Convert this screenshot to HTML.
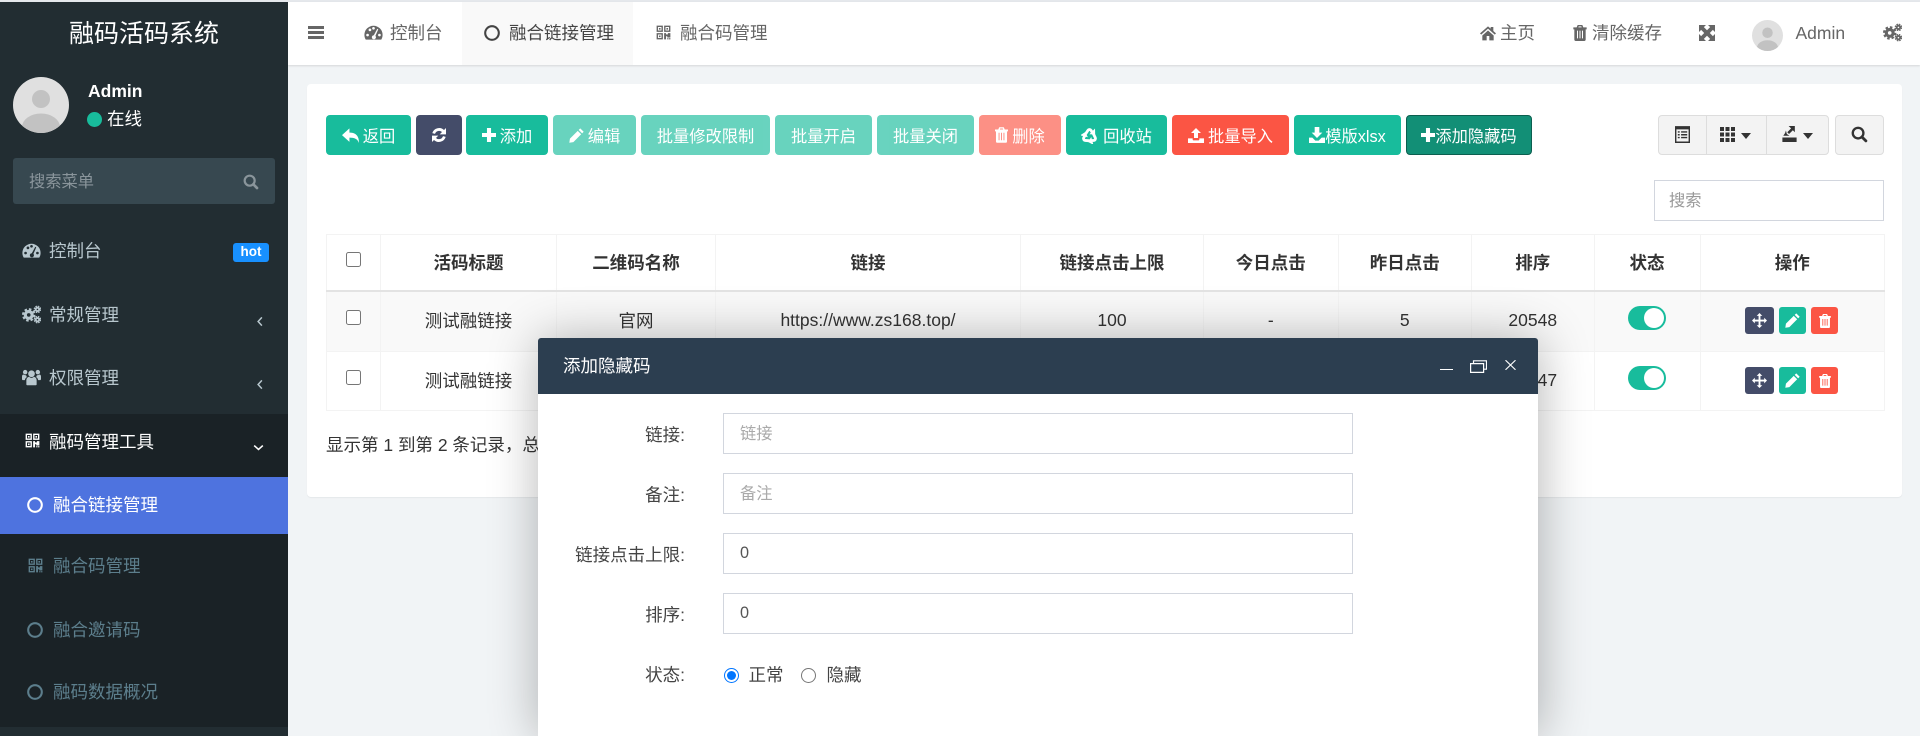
<!DOCTYPE html>
<html lang="zh"><head><meta charset="utf-8"><title>融码活码系统</title>
<style>
*{box-sizing:border-box}
html,body{margin:0;padding:0;width:1920px;height:736px;overflow:hidden;background:#f1f4f6;font-family:"Liberation Sans","Noto Sans CJK SC",sans-serif;font-size:17.5px;color:#333}
#p{position:absolute;left:0;top:0;width:1920px;height:736px;overflow:hidden}
.a,.t,svg.i{position:absolute}
.t{line-height:24px;height:24px;white-space:nowrap}
.btn{position:absolute;top:115px;height:40px;border-radius:4px;background:#18bc9c;color:#fff;font-size:16.25px;display:flex;align-items:center;justify-content:center;gap:4px;white-space:nowrap}
.btn svg{width:17px;height:17px;flex:none}
.dis{opacity:.65}
svg.i{display:block}
table{position:absolute;left:326px;top:234px;width:1558px;border-collapse:collapse;table-layout:fixed;font-size:17.5px}
td,th{border:1px solid #f3f3f3;text-align:center;padding:0;color:#333}
th{font-weight:700;height:56px;border-bottom:2px solid #e3e3e3}
.r1 td{height:61px;background:#f9f9f9;padding-bottom:2px}
.r2 td{height:59px;background:#fff;padding-bottom:2px}
input.c{position:absolute;margin:0;width:15px;height:15px}
.sw{position:absolute;left:1628px;width:38px;height:24px;border-radius:12px;background:#18bc9c}
.sw:after{content:"";position:absolute;right:2px;top:2px;width:20px;height:20px;border-radius:50%;background:#fff}
.op{position:absolute;height:27px;border-radius:3px;display:flex;align-items:center;justify-content:center}
.op svg{width:15px;height:15px;color:#fff}
.inp{position:absolute;left:723px;width:630px;height:41px;border:1px solid #d2d6de;background:#fff;padding-left:16px;line-height:39px;font-size:16.25px;color:#555}
.ph{color:#aaa;line-height:40px}
.lb{position:absolute;right:1235px;height:24px;line-height:24px;color:#444}
.sub{color:#5c7e8c}
.top{color:#b8c7ce}
.h{color:#666}
</style></head><body>
<svg width="0" height="0" style="position:absolute">
<defs>
<symbol id="dash" viewBox="0 0 24 24"><path fill="currentColor" fill-rule="evenodd" d="M12 3.500A11.500 11.500 0 0 0 .5 15c0 2.200.6 4.200 1.700 6h19.600c1.100-1.800 1.700-3.800 1.700-6A11.500 11.500 0 0 0 12 3.500zM4.500 13.500a1.700 1.700 0 1 1 0 3.400 1.700 1.700 0 0 1 0-3.400zM7.500 7a1.700 1.700 0 1 1 0 3.400A1.700 1.700 0 0 1 7.500 7zM12 5a1.700 1.700 0 1 1 0 3.400A1.700 1.700 0 0 1 12 5zM19.500 13.500a1.700 1.700 0 1 1 0 3.400 1.700 1.700 0 0 1 0-3.400zM16.800 7.200l1.200.8-3.600 8.200a2.600 2.600 0 1 1-2-.8z"/></symbol>
<symbol id="cogs" viewBox="0 0 24 24"><g fill="none" stroke="currentColor"><circle cx="8.500" cy="12.500" r="4.300" stroke-width="4"/><circle cx="8.500" cy="12.500" r="7.200" stroke-width="2.600" stroke-dasharray="3.200 2.450"/><circle cx="19.500" cy="5.500" r="2.200" stroke-width="2.400"/><circle cx="19.500" cy="5.500" r="4" stroke-width="1.500" stroke-dasharray="2 1.140"/><circle cx="19.500" cy="18.500" r="2.200" stroke-width="2.400"/><circle cx="19.500" cy="18.500" r="4" stroke-width="1.500" stroke-dasharray="2 1.140"/></g></symbol>
<symbol id="users" viewBox="0 0 24 24"><g fill="currentColor"><circle cx="12" cy="8.500" r="4.200"/><circle cx="4" cy="6.500" r="2.800"/><circle cx="20" cy="6.500" r="2.800"/><path d="M5.500 22v-5c0-3 2-4.500 3.500-4.500 1 .8 2 1.200 3 1.200s2-.4 3-1.200c1.500 0 3.500 1.500 3.500 4.500v5c0 .6-.5 1-1 1h-11c-.5 0-1-.4-1-1z"/><path d="M0 14v-2c0-1.500 1-2.500 2-2.500.7.600 1.400.9 2.200.9.300 0 .6 0 1-.2.100 1 .5 1.800 1.100 2.500-1.500.8-2.400 2.300-2.700 3.800H1c-.6 0-1-.5-1-1.500zM24 14v-2c0-1.500-1-2.500-2-2.500-.7.600-1.400.9-2.200.9-.3 0-.6 0-1-.2-.1 1-.5 1.800-1.100 2.500 1.500.8 2.400 2.300 2.700 3.800H23c.6 0 1-.5 1-1.500z"/></g></symbol>
<symbol id="qr" viewBox="0 0 24 24"><path fill="currentColor" fill-rule="evenodd" d="M1 1h10v10H1zM3.200 3.200v5.600h5.600V3.200zM4.700 4.700h2.600v2.600H4.700zM13 1h10v10H13zM15.200 3.200v5.600h5.600V3.200zM16.700 4.700h2.600v2.600h-2.600zM1 13h10v10H1zM3.200 15.200v5.600h5.600v-5.600zM4.700 16.700h2.600v2.600H4.700zM13 13h3v2h3v-2h4v7h-5v-2h-2v5h-3zM18 21h2v2h-2zM21 21h2v2h-2z"/></symbol>
<symbol id="ring" viewBox="0 0 16 16"><circle cx="8" cy="8" r="6.800" fill="none" stroke="currentColor" stroke-width="2.100"/></symbol>
<symbol id="bars" viewBox="0 0 16 13"><path fill="currentColor" d="M0 0h16v3H0zM0 5h16v3H0zM0 10h16v3H0z"/></symbol>
<symbol id="home" viewBox="0 0 24 24"><path fill="currentColor" d="M12 2 0 12.500l1.800 2L12 5.500l10.200 9 1.800-2-4-3.500V3h-4v2.500zM3.500 15.800V23h6.500v-6.500h4V23h6.500v-7.200L12 8.300z"/></symbol>
<symbol id="trash" viewBox="0 0 20 24"><path fill="currentColor" fill-rule="evenodd" d="M6.500 0h7L15 3.500h5v3h-1.500V22c0 1.200-1 2-2 2h-13c-1 0-2-.8-2-2V6.500H0v-3h5zM8 2 7.500 3.500h5L12 2zM5.500 8.500v11.500h1.500V8.500zM9.250 8.500v11.500h1.500V8.500zM13 8.500v11.500h1.500V8.500z"/></symbol>
<symbol id="expand" viewBox="0 0 24 24"><path fill="currentColor" d="M0 0h10.500L7.300 3.200 12 7.800l4.700-4.600L13.500 0H24v10.500l-3.200-3.200L16.200 12l4.600 4.700 3.200-3.200V24H13.500l3.200-3.200L12 16.200l-4.700 4.600 3.200 3.200H0V13.500l3.200 3.200L7.800 12 3.200 7.300 0 10.500z"/></symbol>
<symbol id="reply" viewBox="0 0 24 24"><path fill="currentColor" d="M10.500 2v6C19 8 24 12 24 22.500c-2-5.500-6-7.500-13.500-7.500v6L0 11.500z"/></symbol>
<symbol id="sync" viewBox="0 0 24 24"><g fill="none" stroke="currentColor" stroke-width="4.200"><path d="M4 9.800A8.500 8.500 0 0 1 18.500 6.500"/><path d="M20 14.200A8.500 8.500 0 0 1 5.500 17.500"/></g><path fill="currentColor" d="M22.500 1.500v9.500H13zM1.500 22.500V13H11z"/></symbol>
<symbol id="plus" viewBox="0 0 24 24"><path fill="currentColor" d="M8.500 0h7v8.500H24v7h-8.500V24h-7v-8.500H0v-7h8.500z"/></symbol>
<symbol id="pen" viewBox="0 0 24 24"><path fill="currentColor" d="M18 .5l5.500 5.500-2.500 2.500L15.500 3zM14 4.500l5.500 5.500L7 22.500 .5 23.500l1-6.500z"/></symbol>
<symbol id="rec" viewBox="0 0 24 24"><g id="ra"><path fill="none" stroke="currentColor" stroke-width="4" d="M6 10.500 9.800 4.800c1-1.500 3.400-1.500 4.400 0l1.800 3"/><path fill="currentColor" d="M11.800 10.300l8.200.2-.2-8.400z"/></g><use href="#ra" transform="rotate(120 12 13)"/><use href="#ra" transform="rotate(240 12 13)"/></symbol>
<symbol id="up" viewBox="0 0 24 24"><path fill="currentColor" d="M12 1.500l7.500 7.500H15v7.500H9V9H4.500zM0 17h7v1.500c0 1 .8 1.500 1.500 1.500h7c.7 0 1.500-.5 1.500-1.500V17h7v7H0z"/></symbol>
<symbol id="down" viewBox="0 0 24 24"><path fill="currentColor" d="M8.500 0h7v8.500H20L12 16.500 4 8.500h4.500zM0 16h5l4.500 4.500h5L19 16h5v8H0z"/></symbol>
<symbol id="list" viewBox="0 0 16 18"><path fill="currentColor" fill-rule="evenodd" d="M0 0h16v18H0zM1.500 3.500V16.500h13V3.500zM3 5.500h2v1.500H3zM6.500 5.500H13v1.500H6.500zM3 8.500h2V10H3zM6.500 8.500H13V10H6.500zM3 11.500h2V13H3zM6.500 11.500H13V13H6.500z"/></symbol>
<symbol id="th" viewBox="0 0 15 15"><path fill="currentColor" d="M0 0h4v4H0zM5.500 0h4v4h-4zM11 0h4v4h-4zM0 5.500h4v4H0zM5.500 5.500h4v4h-4zM11 5.500h4v4h-4zM0 11h4v4H0zM5.500 11h4v4h-4zM11 11h4v4h-4z"/></symbol>
<symbol id="exp" viewBox="0 0 16 18"><path fill="currentColor" d="M7 0h7v7l-2.200-2.200L7.500 9 5.500 7l4.300-4.300zM4 5l1 4 3 2H1l2-3zM0 13h16v5H0z"/></symbol>
<symbol id="sr" viewBox="0 0 24 24"><path fill="none" stroke="currentColor" stroke-width="3.300" d="M10 2.500a7.500 7.500 0 1 0 0 15 7.500 7.500 0 0 0 0-15z"/><path fill="none" stroke="currentColor" stroke-width="4" stroke-linecap="round" d="M15.500 15.500 21 21"/></symbol>
<symbol id="move" viewBox="0 0 24 24"><path fill="currentColor" d="M12 0l4.500 4.500h-3v6h6v-3L24 12l-4.500 4.500v-3h-6v6h3L12 24l-4.500-4.500h3v-6h-6v3L0 12l4.500-4.500v3h6v-6h-3z"/></symbol>
<symbol id="lft" viewBox="0 0 8 14"><path fill="none" stroke="currentColor" stroke-width="2" d="M6.500 1.500 1.500 7l5 5.500"/></symbol>
<symbol id="dwn" viewBox="0 0 14 8"><path fill="none" stroke="currentColor" stroke-width="2" d="M1.500 1.500 7 6.500l5.500-5"/></symbol>
</defs></svg>
<div id="p">
<!-- top strip + header -->
<div class="a" style="left:0;top:0;width:1920px;height:2px;background:#e5e8ec"></div>
<div class="a" style="left:288px;top:2px;width:1632px;height:63px;background:#fff;box-shadow:0 1px 2px rgba(0,0,0,.12)"></div>
<div class="a" style="left:462px;top:2px;width:171px;height:63px;background:#f9f9f9"></div>
<svg class="i h" style="left:308px;top:26px;width:16px;height:13px"><use href="#bars"/></svg>
<svg class="i h" style="left:364px;top:23px;width:19px;height:19px"><use href="#dash"/></svg>
<div class="t" style="left:390px;top:21px;color:#666">控制台</div>
<svg class="i" style="left:484px;top:25px;width:16px;height:16px;color:#444"><use href="#ring"/></svg>
<div class="t" style="left:509px;top:21px;color:#444">融合链接管理</div>
<svg class="i h" style="left:656px;top:25px;width:15px;height:15px"><use href="#qr"/></svg>
<div class="t" style="left:680px;top:21px;color:#666">融合码管理</div>
<svg class="i h" style="left:1480px;top:25px;width:16px;height:16px"><use href="#home"/></svg>
<div class="t" style="left:1500px;top:21px;color:#666">主页</div>
<svg class="i h" style="left:1573px;top:25px;width:14px;height:16px"><use href="#trash"/></svg>
<div class="t" style="left:1592px;top:21px;color:#666">清除缓存</div>
<svg class="i h" style="left:1699px;top:25px;width:16px;height:16px"><use href="#expand"/></svg>
<svg class="i" style="left:1752px;top:20px;width:31px;height:31px" viewBox="0 0 56 56"><clipPath id="c1"><circle cx="28" cy="28" r="28"/></clipPath><circle cx="28" cy="28" r="28" fill="#e0e0e0"/><g clip-path="url(#c1)" fill="#c2c2c2"><circle cx="28" cy="23" r="9.500"/><ellipse cx="28" cy="50" rx="19" ry="13.500"/></g></svg>
<div class="t" style="left:1795.500px;top:21px;color:#666">Admin</div>
<svg class="i h" style="left:1883px;top:23px;width:19px;height:19px"><use href="#cogs"/></svg>

<!-- sidebar -->
<div class="a" style="left:0;top:2px;width:288px;height:734px;background:#222d32"></div>
<div class="a" style="left:0;top:414px;width:288px;height:313px;background:#1a2226"></div>
<div class="a" style="left:0;top:477px;width:288px;height:57px;background:#4e73df"></div>
<div class="t" style="left:0;top:19px;width:288px;height:30px;line-height:30px;text-align:center;font-size:25px;color:#fff">融码活码系统</div>
<svg class="i" style="left:13px;top:77px;width:56px;height:56px" viewBox="0 0 56 56"><clipPath id="c2"><circle cx="28" cy="28" r="28"/></clipPath><circle cx="28" cy="28" r="28" fill="#e0e0e0"/><g clip-path="url(#c2)" fill="#c2c2c2"><circle cx="28" cy="22" r="9"/><ellipse cx="28" cy="50" rx="19" ry="13.500"/></g></svg>
<div class="t" style="left:88px;top:79px;font-weight:700;color:#fff;font-size:17.500px">Admin</div>
<div class="a" style="left:87px;top:112px;width:15px;height:15px;border-radius:50%;background:#18bc9c"></div>
<div class="t" style="left:107px;top:107px;color:#fff">在线</div>
<div class="a" style="left:13px;top:158px;width:262px;height:46px;border-radius:3px;background:#374850"></div>
<div class="t" style="left:29px;top:170px;font-size:16.250px;color:#8a959b">搜索菜单</div>
<svg class="i" style="left:243px;top:174px;width:16px;height:16px;color:#8a959b"><use href="#sr"/></svg>

<svg class="i top" style="left:22px;top:241px;width:19px;height:19px"><use href="#dash"/></svg>
<div class="t top" style="left:49px;top:239px">控制台</div>
<div class="a" style="left:233px;top:243px;width:36px;height:19px;border-radius:3px;background:#1890ff;color:#fff;font-weight:700;font-size:13.500px;line-height:18px;text-align:center">hot</div>
<svg class="i top" style="left:22px;top:305px;width:19px;height:19px"><use href="#cogs"/></svg>
<div class="t top" style="left:49px;top:303px">常规管理</div>
<svg class="i top" style="left:257px;top:316px;width:6px;height:11px"><use href="#lft"/></svg>
<svg class="i top" style="left:22px;top:367px;width:19px;height:19px"><use href="#users"/></svg>
<div class="t top" style="left:49px;top:366px">权限管理</div>
<svg class="i top" style="left:257px;top:379px;width:6px;height:11px"><use href="#lft"/></svg>
<svg class="i" style="left:24.500px;top:433px;width:15px;height:15px;color:#fff"><use href="#qr"/></svg>
<div class="t" style="left:49px;top:430px;color:#fff">融码管理工具</div>
<svg class="i" style="left:253px;top:444px;width:11px;height:7px;color:#fff"><use href="#dwn"/></svg>
<svg class="i" style="left:27px;top:497px;width:16px;height:16px;color:#fff"><use href="#ring"/></svg>
<div class="t" style="left:53px;top:493px;color:#fff">融合链接管理</div>
<svg class="i sub" style="left:28px;top:558px;width:15px;height:15px"><use href="#qr"/></svg>
<div class="t sub" style="left:53px;top:554px">融合码管理</div>
<svg class="i sub" style="left:27px;top:622px;width:16px;height:16px"><use href="#ring"/></svg>
<div class="t sub" style="left:53px;top:618px">融合邀请码</div>
<svg class="i sub" style="left:27px;top:684px;width:16px;height:16px"><use href="#ring"/></svg>
<div class="t sub" style="left:53px;top:680px">融码数据概况</div>

<!-- panel -->
<div class="a" style="left:307px;top:84px;width:1595px;height:413px;background:#fff;border-radius:4px;box-shadow:0 1px 1px rgba(0,0,0,.05)"></div>
<div class="btn" style="left:326px;width:85px"><svg><use href="#reply"/></svg>返回</div>
<div class="btn" style="left:416px;width:46px;background:#444c69"><svg style="width:16px;height:16px"><use href="#sync"/></svg></div>
<div class="btn" style="left:466px;width:82px"><svg style="width:14px;height:14px"><use href="#plus"/></svg>添加</div>
<div class="btn dis" style="left:553px;width:83px"><svg style="width:15px;height:15px"><use href="#pen"/></svg>编辑</div>
<div class="btn dis" style="left:641px;width:129px">批量修改限制</div>
<div class="btn dis" style="left:775px;width:97px">批量开启</div>
<div class="btn dis" style="left:877px;width:97px">批量关闭</div>
<div class="btn dis" style="left:979px;width:82px;background:#fb5544"><svg style="width:13px;height:16px"><use href="#trash"/></svg>删除</div>
<div class="btn" style="left:1066px;width:101px;gap:5px"><svg style="width:17px;height:17px"><use href="#rec"/></svg>回收站</div>
<div class="btn" style="left:1172px;width:117px;background:#fb5544"><svg style="width:16px;height:16px"><use href="#up"/></svg>批量导入</div>
<div class="btn" style="left:1294px;width:107px;gap:0"><svg style="width:16px;height:16px"><use href="#down"/></svg>模版xlsx</div>
<div class="btn" style="left:1406px;width:126px;gap:0;background:#128f76;border:1px solid #0c5f4f"><svg style="width:14px;height:14px"><use href="#plus"/></svg>添加隐藏码</div>

<div class="a" style="left:1658px;top:115px;width:171px;height:40px;background:#f3f3f3;border:1px solid #ddd;border-radius:4px"></div>
<div class="a" style="left:1706px;top:116px;width:1px;height:38px;background:#ddd"></div>
<div class="a" style="left:1766px;top:116px;width:1px;height:38px;background:#ddd"></div>
<svg class="i" style="left:1675px;top:126px;width:15px;height:17px;color:#333"><use href="#list"/></svg>
<svg class="i" style="left:1720px;top:127px;width:15px;height:15px;color:#333"><use href="#th"/></svg>
<div class="a" style="left:1741px;top:133px;border:5px solid transparent;border-top:6px solid #333;border-bottom:0"></div>
<svg class="i" style="left:1782px;top:126px;width:15px;height:16px;color:#333"><use href="#exp"/></svg>
<div class="a" style="left:1803px;top:133px;border:5px solid transparent;border-top:6px solid #333;border-bottom:0"></div>
<div class="a" style="left:1835px;top:115px;width:49px;height:40px;background:#f3f3f3;border:1px solid #ddd;border-radius:4px"></div>
<svg class="i" style="left:1851px;top:126px;width:17px;height:17px;color:#333"><use href="#sr"/></svg>
<div class="a" style="left:1654px;top:180px;width:230px;height:41px;border:1px solid #d2d6de;background:#fff"></div>
<div class="t" style="left:1669px;top:189px;font-size:16.250px;color:#999">搜索</div>

<table>
<colgroup><col style="width:54px"><col style="width:176px"><col style="width:159px"><col style="width:305px"><col style="width:183px"><col style="width:134.500px"><col style="width:133.500px"><col style="width:122.500px"><col style="width:106px"><col style="width:184.500px"></colgroup>
<tr><th></th><th>活码标题</th><th>二维码名称</th><th>链接</th><th>链接点击上限</th><th>今日点击</th><th>昨日点击</th><th>排序</th><th>状态</th><th>操作</th></tr>
<tr class="r1"><td></td><td>测试融链接</td><td>官网</td><td>https://www.zs168.top/</td><td>100</td><td>-</td><td>5</td><td>20548</td><td></td><td></td></tr>
<tr class="r2"><td></td><td>测试融链接</td><td>官网</td><td>https://www.zs168.top/</td><td>100</td><td>-</td><td>5</td><td>20547</td><td></td><td></td></tr>
</table>
<input class="c" type="checkbox" style="left:346px;top:252px">
<input class="c" type="checkbox" style="left:346px;top:310px">
<input class="c" type="checkbox" style="left:346px;top:370px">
<div class="sw" style="top:306px"></div>
<div class="sw" style="top:366px"></div>
<div class="op" style="left:1745px;top:307px;width:29px;background:#444c69"><svg><use href="#move"/></svg></div>
<div class="op" style="left:1779px;top:307px;width:27px;background:#18bc9c"><svg><use href="#pen"/></svg></div>
<div class="op" style="left:1811px;top:307px;width:27px;background:#fb5544"><svg style="width:12px;height:14px"><use href="#trash"/></svg></div>
<div class="op" style="left:1745px;top:367px;width:29px;background:#444c69"><svg><use href="#move"/></svg></div>
<div class="op" style="left:1779px;top:367px;width:27px;background:#18bc9c"><svg><use href="#pen"/></svg></div>
<div class="op" style="left:1811px;top:367px;width:27px;background:#fb5544"><svg style="width:12px;height:14px"><use href="#trash"/></svg></div>
<div class="t" style="left:326px;top:433px">显示第 1 到第 2 条记录，总共 2 条记录</div>

<!-- modal -->
<div class="a" style="left:538px;top:338px;width:1000px;height:398px;background:#fff;border-radius:3px 3px 0 0;box-shadow:1px 1px 50px rgba(0,0,0,.3)"></div>
<div class="a" style="left:538px;top:338px;width:1000px;height:56px;background:#2c3e50;border-radius:3px 3px 0 0"></div>
<div class="t" style="left:563px;top:354px;color:#fff">添加隐藏码</div>
<div class="a" style="left:1440px;top:369px;width:13px;height:1px;background:#fff"></div>
<svg class="i" style="left:1470px;top:360px;width:17px;height:13px;color:#fff" viewBox="0 0 17 13"><path fill="none" stroke="currentColor" stroke-width="1.200" d="M.6 3.600h13v8.800H.6zM3.500 3.200V.8h13v8.400h-2.500"/></svg>
<svg class="i" style="left:1505px;top:360px;width:11px;height:10px;color:#fff" viewBox="0 0 11 10"><path fill="none" stroke="currentColor" stroke-width="1.100" d="M.5.200 10.500 9.800M10.500.2.500 9.800"/></svg>

<div class="lb" style="top:423px">链接:</div>
<div class="lb" style="top:483px">备注:</div>
<div class="lb" style="top:543px">链接点击上限:</div>
<div class="lb" style="top:603px">排序:</div>
<div class="lb" style="top:663px">状态:</div>
<div class="inp ph" style="top:413px">链接</div>
<div class="inp ph" style="top:473px">备注</div>
<div class="inp" style="top:533px">0</div>
<div class="inp" style="top:593px">0</div>
<input class="c" type="radio" name="s" checked style="left:724px;top:668px">
<div class="t" style="left:748.500px;top:663px;color:#444">正常</div>
<input class="c" type="radio" name="s" style="left:801px;top:668px">
<div class="t" style="left:826.500px;top:663px;color:#444">隐藏</div>
</div>
</body></html>
